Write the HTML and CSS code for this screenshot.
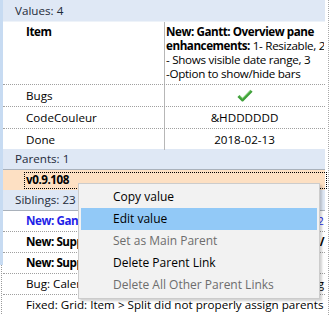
FILE: index.html
```html
<!DOCTYPE html>
<html lang="en">

<head>
  <meta charset="UTF-8">
  <meta name="viewport" content="width=device-width, initial-scale=1.0">
  <title>Item properties</title>
  <link rel="stylesheet" href="styles.css">
</head>

<body>
  <div class="frame">
    <div class="panel">
      <div class="group-head first">Values: 4</div>

      <div class="vrow item">
        <div class="vname"><b>Item</b></div>
        <div class="vval text">
          <b>New: Gantt: Overview pane</b><br>
          <b>enhancements:</b> 1- Resizable, 2<br>
          - Shows visible date range, 3<br>
          -Option to show/hide bars
        </div>
      </div>
      <div class="vrow">
        <div class="vname">Bugs</div>
        <div class="vval">
          <svg class="check" width="16" height="13" viewBox="0 0 16 13">
            <path d="M1.5 7 L5.5 11 L14.5 1.8" fill="none" stroke="#3f9f3a" stroke-width="3" stroke-linejoin="round" />
            <path d="M2.5 6.8 L5.5 9.6 L13.8 1.4" fill="none" stroke="#7fd46f" stroke-width="1" />
          </svg>
        </div>
      </div>
      <div class="vrow">
        <div class="vname">CodeCouleur</div>
        <div class="vval">&amp;HDDDDDD</div>
      </div>
      <div class="vrow last">
        <div class="vname">Done</div>
        <div class="vval">2018-02-13</div>
      </div>

      <div class="group-head">Parents: 1</div>
      <div class="row selected"><span class="focus"><b>v0.9.108</b></span></div>

      <div class="group-head">Siblings: 23</div>
      <div class="row sib current">
        <div class="line"><span class="lead"><b>New: Gantt: Overview pane enhancements:</b> 1- Resizable,</span><span>2</span></div>
        <div>- Shows visible date range, 3 -Option to show/hide bars</div>
      </div>
      <div class="row sib">
        <div class="line"><span class="lead"><b>New: Support for Item Templates in the Tree view and Grid</b></span><b>/</b></div>
        <div>Are defined as Items of a Template Type</div>
      </div>
      <div class="row sib">
        <div class="line"><span class="lead"><b>New: Support for multiple Parents per Item</b></span></div>
        <div>An Item can now belong to several parents</div>
      </div>
      <div class="row sib">
        <div class="line"><span class="lead">Bug: Calendar: Items with no End Date were hidden when dragging</span><span>g</span></div>
        <div>when the view was not the Month view</div>
      </div>
      <div class="row sib">
        <div class="line"><span class="lead">Fixed: Grid: Item &gt; Split did not properly assign parents</span></div>
      </div>
    </div>

    <div class="menu">
      <div class="menu-item">Copy value</div>
      <div class="menu-item hover">Edit value</div>
      <div class="menu-item disabled">Set as Main Parent</div>
      <div class="menu-item">Delete Parent Link</div>
      <div class="menu-item disabled">Delete All Other Parent Links</div>
    </div>
  </div>
</body>

</html>
```

FILE: styles.css
```css
body {
  margin: 0;
  background: #fff;
  font-family: "Open Sans", "Noto Sans", sans-serif;
  font-size: 11.65px;
  color: #000;
  overflow: hidden;
}

b {
  letter-spacing: -0.45px;
}

.frame {
  position: relative;
  width: 331px;
  height: 315px;
  overflow: hidden;
  background:
    linear-gradient(#c7dbf2, #c7dbf2) 0 0 / 3px 265px no-repeat,
    repeating-linear-gradient(#9a9a9a 0 1px, transparent 1px 2px) 1px 265px / 1px 50px no-repeat,
    repeating-linear-gradient(#a8a8a8 0 1px, transparent 1px 2px) 328px 0 / 1px 315px no-repeat;
}

.panel {
  margin-left: 3px;
  width: 322px;
}

.group-head {
  height: 20px;
  line-height: 20px;
  padding-left: 12px;
  background: #dfe8f5;
  color: #1e2a3a;
  border-bottom: 1px solid #a9b1bb;
}

.group-head.first {
  height: 21px;
  line-height: 21px;
  border-bottom-color: #eef3f9;
}

.vrow {
  display: grid;
  grid-template-columns: 162px 159px;
  height: 21px;
  border-bottom: 1px dotted #a0a0a0;
}

.vrow.item {
  height: 62px;
}

.vrow.last {
  border-bottom: none;
  height: 20px;
}

.vname {
  border-right: 1px solid #b7b7b7;
  padding-left: 23px;
  line-height: 21px;
}

.item .vname {
  line-height: 14px;
  padding-top: 3px;
}

.vval {
  display: flex;
  align-items: center;
  justify-content: center;
}

.vval.text {
  display: block;
  padding: 3px 0 0 1px;
  line-height: 14px;
  white-space: nowrap;
  overflow: hidden;
  letter-spacing: -0.3px;
}

.check {
  display: block;
}

.row {
  padding-left: 23px;
}

.selected {
  height: 20px;
  background: #fde0c3;
  display: flex;
  align-items: center;
}

.focus {
  display: block;
  flex: 1;
  margin: 0 -2px 0 -2px;
  padding: 0 2px;
  height: 17px;
  line-height: 16px;
  outline: 1px dotted #000;
  outline-offset: -1px;
}

.sib {
  padding-top: 3px;
  padding-right: 1px;
  box-sizing: border-box;
  height: 21px;
  line-height: 14px;
  overflow: hidden;
  white-space: nowrap;
  border-bottom: 1px dotted #a0a0a0;
}

.line {
  display: flex;
}

.lead {
  flex: 1;
  min-width: 0;
  overflow: hidden;
}

.sib.current {
  color: #1f1fe8;
}

.menu {
  position: absolute;
  left: 78px;
  top: 183px;
  width: 236px;
  padding: 2px;
  background: #f2f2f2;
  border: 1px solid #cccccc;
  box-shadow: 2px 2px 2px rgba(0, 0, 0, 0.18);
}

.menu-item {
  height: 22px;
  line-height: 22px;
  padding-left: 32px;
  font-size: 12px;
}

.menu-item.hover {
  background: #92c9f7;
}

.menu-item.disabled {
  color: #6d6d6d;
}
```
